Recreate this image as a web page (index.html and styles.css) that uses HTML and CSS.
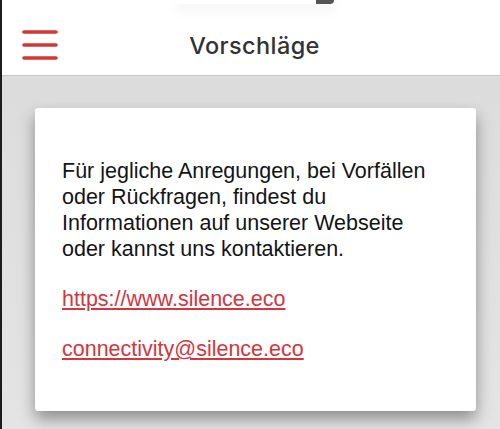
FILE: index.html
```html
<!DOCTYPE html>
<html lang="de">
<head>
  <meta charset="UTF-8">
  <meta name="viewport" content="width=device-width, initial-scale=1.0">
  <title>Vorschläge</title>
  <link rel="stylesheet" href="styles.css">
</head>
<body>
  <div class="screen">
    <div class="toast-edge"><span class="toast-tab"></span></div>
    <header class="top-bar">
      <button class="menu-btn" aria-label="Menü">
        <svg width="36" height="30" viewBox="0 0 36 30">
          <path d="M2 2h32M2 15h32M2 28h32" stroke="#d43631" stroke-width="3.6" stroke-linecap="round" fill="none"/>
        </svg>
      </button>
      <h1 class="title">Vorschläge</h1>
      <span></span>
    </header>
    <main class="content">
      <div class="card">
        <p>Für jegliche Anregungen, bei Vorfällen<br>oder Rückfragen, findest du<br>Informationen auf unserer Webseite<br>oder kannst uns kontaktieren.</p>
        <p><a href="https://www.silence.eco">https://www.silence.eco</a></p>
        <p><a href="mailto:connectivity@silence.eco">connectivity@silence.eco</a></p>
      </div>
    </main>
  </div>
</body>
</html>
```

FILE: styles.css
```css
html, body {
  margin: 0;
  padding: 0;
  height: 100%;
}
body {
  font-family: "Liberation Sans", Arial, sans-serif;
  background-color: #e1e1e1;
}
.screen {
  position: relative;
  min-height: 100%;
  border-left: 2px solid #1c1c1c;
  display: flex;
  flex-direction: column;
  overflow: hidden;
}
.toast-edge {
  position: absolute;
  top: 0;
  left: 174px;
  width: 158px;
  height: 4px;
  background: #fff;
  border-radius: 0 0 4px 4px;
  box-shadow: 0 4px 14px rgba(0,0,0,0.12);
  display: flex;
  justify-content: flex-end;
  z-index: 2;
}
.toast-tab {
  width: 18px;
  background: #555;
  border-radius: 0 0 5px 0;
}
.top-bar {
  height: 60px;
  padding: 15px 13px 0 20px;
  background: #fff;
  border-bottom: 1px solid #c9c9c9;
  display: grid;
  grid-template-columns: 1fr auto 1fr;
  align-items: center;
}
.menu-btn {
  background: none;
  border: none;
  padding: 0;
  width: 36px;
  height: 30px;
  cursor: pointer;
  justify-self: start;
  display: flex;
}
.title {
  margin: 0;
  font-family: Inter, "DejaVu Sans", sans-serif;
  font-weight: 500;
  font-size: 23.5px;
  color: #333;
  letter-spacing: 0.4px;
}
.content {
  flex: 1;
  padding: 32px 24px 0 33px;
  background: linear-gradient(#dcdcdc, #e4e4e4);
}
.card {
  background: #fff;
  border-radius: 3px;
  box-shadow: 0 8px 16px rgba(0,0,0,0.38);
  padding: 50px 20px 49px 27px;
}
.card p {
  margin: 0 0 24px;
  font-size: 21.5px;
  line-height: 26px;
  color: #141414;
}
.card p:last-child {
  margin-bottom: 0;
}
.card a {
  color: #d5353b;
  text-decoration: underline;
}
```
